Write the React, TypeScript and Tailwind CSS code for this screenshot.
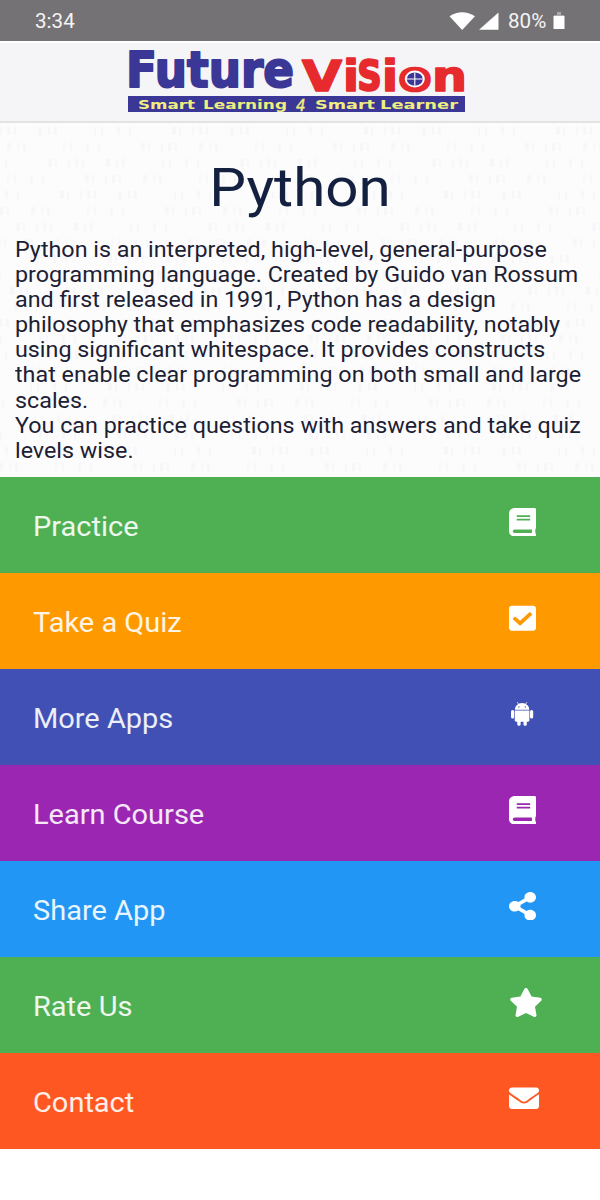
import type { ReactNode } from 'react';
import { FaBook, FaCheckSquare, FaEnvelope, FaShareAlt, FaStar } from 'react-icons/fa';

interface MenuItem {
  label: string;
  color: string;
  icon: ReactNode;
}

const iconClass = 'h-[28.5px] w-[27px]';

function AndroidIcon() {
  return (
    <svg viewBox="0 0 26 30" className="h-[30px] w-[26px]" fill="currentColor">
      <path d="M5.8 10.8a7.3 6.7 0 0 1 14.6 0z" />
      <path d="M8.3 3.2l1.7 2.6M17.9 3.2l-1.7 2.6" stroke="currentColor" strokeWidth="0.8" />
      <circle cx="9.9" cy="7.9" r="0.7" fill="#4050b5" />
      <circle cx="16.3" cy="7.9" r="0.7" fill="#4050b5" />
      <path d="M5.8 11.5h14.6v9.8a1.4 1.4 0 0 1-1.4 1.4H7.2a1.4 1.4 0 0 1-1.4-1.4z" />
      <rect x="2" y="11" width="3.2" height="8.6" rx="1.6" />
      <rect x="21" y="11" width="3.2" height="8.6" rx="1.6" />
      <rect x="8.3" y="20" width="3.3" height="6.8" rx="1.6" />
      <rect x="14.5" y="20" width="3.3" height="6.8" rx="1.6" />
    </svg>
  );
}

const items: MenuItem[] = [
  { label: 'Practice', color: 'bg-[#4eb052]', icon: <FaBook className={iconClass} preserveAspectRatio="none" /> },
  { label: 'Take a Quiz', color: 'bg-[#ff9900]', icon: <FaCheckSquare className={iconClass} preserveAspectRatio="none" /> },
  { label: 'More Apps', color: 'bg-[#4050b5]', icon: <AndroidIcon /> },
  { label: 'Learn Course', color: 'bg-[#9b26b2]', icon: <FaBook className={iconClass} preserveAspectRatio="none" /> },
  { label: 'Share App', color: 'bg-[#2296f4]', icon: <FaShareAlt className={iconClass} preserveAspectRatio="none" /> },
  { label: 'Rate Us', color: 'bg-[#4eb052]', icon: <FaStar className="h-[29px] w-[34px]" preserveAspectRatio="none" /> },
  { label: 'Contact', color: 'bg-[#ff5722]', icon: <FaEnvelope className="h-[28.5px] w-[30px]" preserveAspectRatio="none" /> },
];

const paragraph = [
  'Python is an interpreted, high-level, general-purpose',
  'programming language. Created by Guido van Rossum',
  'and first released in 1991, Python has a design',
  'philosophy that emphasizes code readability, notably',
  'using significant whitespace. It provides constructs',
  'that enable clear programming on both small and large',
  'scales.',
  'You can practice questions with answers and take quiz',
  'levels wise.',
];

function StatusBar() {
  return (
    <div className="flex h-[41px] items-center justify-between bg-[#747274] pl-[35px] pr-[34px] text-[20px] text-[#f4f4f4]">
      <span className="origin-left scale-x-[1.03]">3:34</span>
      <div className="flex items-center">
        <svg viewBox="0 0 52 20" className="h-5 w-[52px]" fill="#fff">
          <path d="M0.5 5.2Q13 -2.8 26 5.2L13.2 19z" />
          <path d="M30 18.8H49.5V1.5z" />
        </svg>
        <span className="ml-[7px] origin-left scale-x-[1.03]">80%</span>
        <svg viewBox="0 0 12 20" className="ml-[8px] mr-[1px] h-5 w-3">
          <path d="M4 1h4v3h3v3H1V4h3z" fill="#aaa8aa" />
          <path d="M0.5 5h11v13h-11z" fill="#fff" />
        </svg>
      </div>
    </div>
  );
}

function Logo() {
  return (
    <svg
      viewBox="126 46 342 68"
      className="h-[68px] w-[342px] overflow-visible"
      fontFamily="'DejaVu Sans', sans-serif"
      fontWeight="bold"
      strokeLinejoin="round"
    >
      <g fill="#3a3796" stroke="#3a3796" strokeWidth="2" fontSize="49">
        <text x="126" y="87" textLength="168" lengthAdjust="spacingAndGlyphs">Future</text>
      </g>
      <g fill="#e62a2d" stroke="#e62a2d" strokeWidth="1.6" fontSize="43">
        <text x="302" y="90.5" textLength="40" lengthAdjust="spacingAndGlyphs">V</text>
        <text x="343" y="90.5" textLength="16" lengthAdjust="spacingAndGlyphs">i</text>
        <text x="357.5" y="90" textLength="24" fontSize="41" strokeWidth="2.4" lengthAdjust="spacingAndGlyphs">S</text>
        <text x="382" y="90.5" textLength="16" lengthAdjust="spacingAndGlyphs">i</text>
        <text x="398" y="90.5" textLength="34" lengthAdjust="spacingAndGlyphs">o</text>
        <text x="432" y="90.5" textLength="35" lengthAdjust="spacingAndGlyphs">n</text>
      </g>
      <ellipse cx="414.8" cy="79" rx="10" ry="8.4" fill="#fff" />
      <ellipse cx="414.8" cy="79" rx="8" ry="6.6" fill="#3a3796" />
      <path d="M406.8 79h16M414.8 72.4v13.2" stroke="#fff" strokeWidth="1.1" />
      <rect x="128" y="96" width="337" height="16" fill="#3a3796" />
      <g fill="#f0ee80" fontSize="11.5">
        <text x="138" y="108.7" textLength="57" lengthAdjust="spacingAndGlyphs">Smart</text>
        <text x="203" y="108.7" textLength="84" lengthAdjust="spacingAndGlyphs">Learning</text>
        <text x="296" y="110.5" fontSize="15" fontStyle="italic" fontWeight="normal" stroke="#f0ee80" strokeWidth="0.4">4</text>
        <text x="315" y="108.7" textLength="60" lengthAdjust="spacingAndGlyphs">Smart</text>
        <text x="380" y="108.7" textLength="78" lengthAdjust="spacingAndGlyphs">Learner</text>
      </g>
    </svg>
  );
}

// Faint rows of broken dashes behind the description
function Texture() {
  const rows = Array.from({ length: 22 }, (_, i) => i);
  return (
    <svg className="absolute inset-0 h-full w-full" stroke="#f7f7f9" strokeWidth="8">
      {rows.map((i) => (
        <line
          key={i}
          x1="0"
          x2="600"
          y1={8 + i * 16}
          y2={8 + i * 16}
          strokeDasharray="2 5 3 4 2 22 4 6 2 4 3 37 2 5 2 14 3 9 2 41 4 3 2 11"
          strokeDashoffset={(i * i * 31) % 192}
        />
      ))}
    </svg>
  );
}

export default function App() {
  return (
    <div className="min-h-[1200px] w-[600px] overflow-hidden bg-white font-['Roboto',sans-serif]">
      <StatusBar />
      <header className="flex h-[82px] items-start justify-center border-b-2 border-t-2 border-b-[#e3e2e5] border-t-white bg-[#f5f4f6] pt-[3px] pr-[6px]">
        <Logo />
      </header>
      <section className="relative h-[354px] bg-[#fcfcfd]">
        <Texture />
        <div className="relative">
          <h1 className="scale-x-[1.08] pt-[32px] text-center text-[54px] leading-[66px] text-[#14203f]">Python</h1>
          <div className="ml-[14.5px] w-[540px] origin-left scale-x-[1.059] pt-[16px] text-[22px] leading-[25.1px] text-[#1c2033]">
            {paragraph.map((line) => (
              <p key={line} className="whitespace-nowrap">{line}</p>
            ))}
          </div>
        </div>
      </section>
      <nav>
        {items.map(({ label, color, icon }) => (
          <div key={label} className={`flex h-24 items-center pl-[32.5px] text-white ${color}`}>
            <div className="w-[476.5px] pt-[4px] text-[27px] text-white/90">
              <span className="inline-block origin-left scale-x-[1.073]">{label}</span>
            </div>
            <span className="pb-[6px]">{icon}</span>
          </div>
        ))}
      </nav>
    </div>
  );
}
